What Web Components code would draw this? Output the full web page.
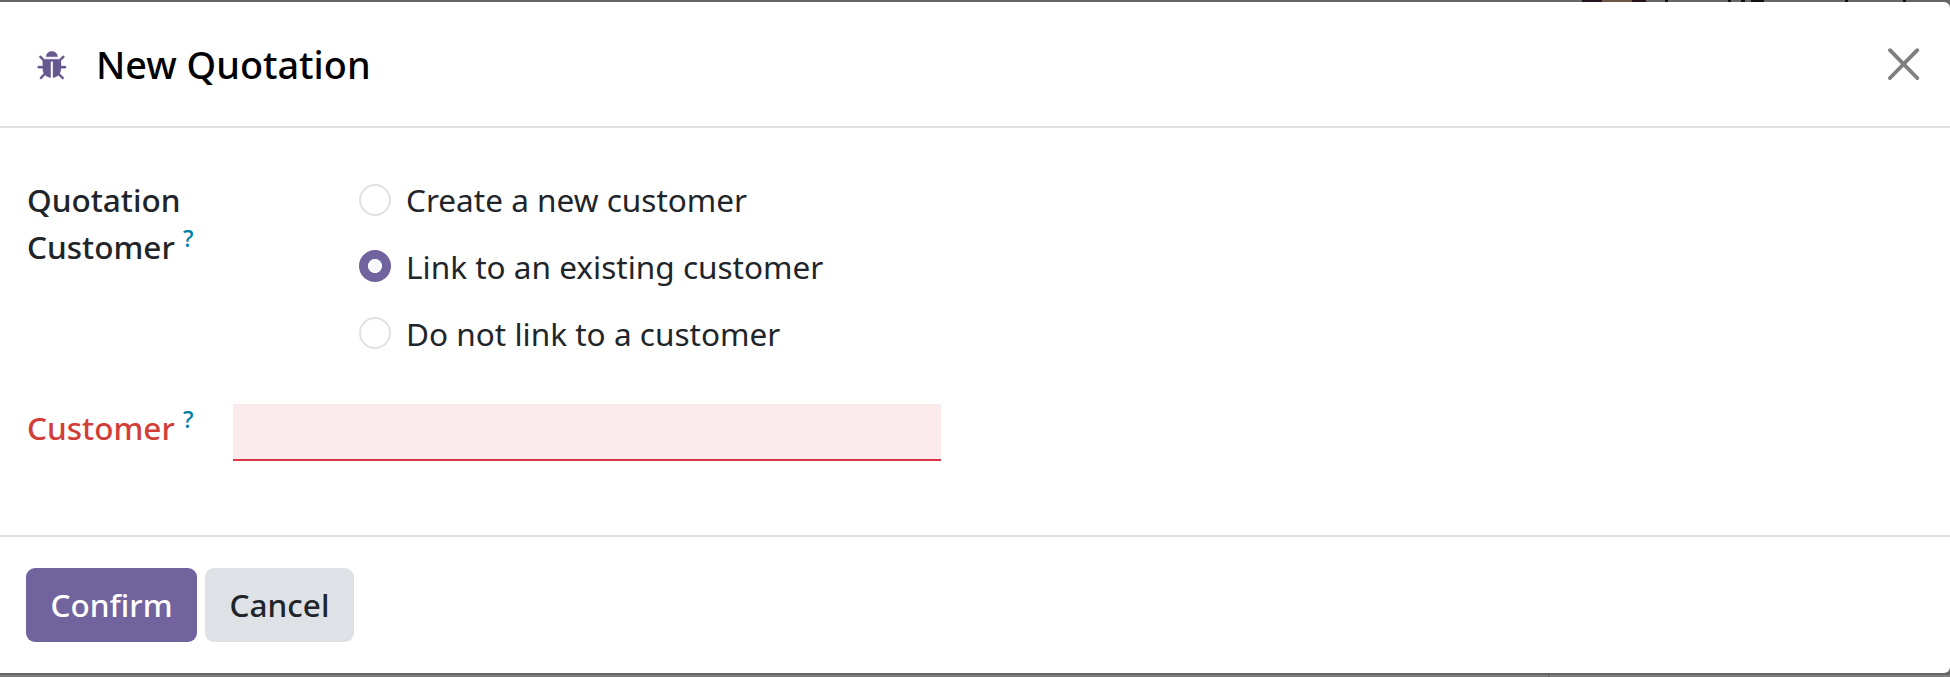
<!DOCTYPE html>
<html lang="en">
<head>
<meta charset="utf-8">
<title>New Quotation</title>
<style>
html,body{margin:0;height:100%;overflow:hidden}
body{font:400 31.54px/46.8px "Noto Sans",sans-serif;color:#212529;background:#666}
</style>
</head>
<body>
<quote-dialog>
  <bug-icon slot="icon"></bug-icon>
  <span slot="title">New Quotation</span>
  <form-row kind="radios">
    <field-label slot="label">Quotation Customer</field-label>
    <radio-option>Create a new customer</radio-option>
    <radio-option checked>Link to an existing customer</radio-option>
    <radio-option>Do not link to a customer</radio-option>
  </form-row>
  <form-row kind="input">
    <field-label slot="label" invalid>Customer</field-label>
    <text-field></text-field>
  </form-row>
  <action-button slot="footer" primary>Confirm</action-button>
  <action-button slot="footer">Cancel</action-button>
</quote-dialog>
<script>
const define = (name, html) => customElements.define(name, class extends HTMLElement {
  constructor() {
    super();
    this.attachShadow({mode: 'open'}).innerHTML = html;
  }
});

define('bug-icon', `<style>:host{display:block;width:32px;height:32px;margin-top:3px}svg{display:block;width:100%;height:100%}</style>
<svg viewBox="0 0 1792 1792" fill="#665990" stroke="#665990" stroke-width="16"><path d="M1632 960q0 26-19 45t-45 19h-224q0 171-67 290l208 209q19 19 19 45t-19 45q-18 19-45 19t-45-19l-198-197q-5 5-15 13t-42 28.500-65 36.500-82 29-97 13v-896h-128v896q-51 0-101.500-13.500t-87-33-66-39-43.500-32.500l-15-14-183 207q-20 21-48 21-24 0-43-16-19-18-20.500-44.500t15.500-46.500l202-227q-58-114-58-274h-224q-26 0-45-19t-19-45 19-45 45-19h224v-294l-173-173q-19-19-19-45t19-45 45-19 45 19l173 173h844l173-173q19-19 45-19t45 19 19 45-19 45l-173 173v294h224q26 0 45 19t19 45zm-480-576h-640q0-133 93.500-226.500t226.500-93.500 226.500 93.500 93.500 226.500z"/></svg>`);

define('close-button', `<style>:host{display:block;width:32px;height:32px}svg{display:block}</style>
<svg width="32" height="32" viewBox="0 0 32 32"><path d="M2 2.200 29.200 30M29.200 2.200 2 30" stroke="#7f7f7f" stroke-width="3.900" stroke-linecap="round"/></svg>`);

define('backdrop-strip', `<style>
:host{display:block;height:2px;position:relative;background:#676565;overflow:hidden}
.avatar{position:absolute;left:1582px;top:0;width:64px;height:2px;background:linear-gradient(90deg,#26121f 20px,#6f5644 20px 50px,#26121f 50px)}
i{position:absolute;top:0;height:2px;background:#111}
</style><div class="avatar"></div>
<i style="left:1665px;width:3px"></i><i style="left:1728px;width:3px"></i><i style="left:1741px;width:4px"></i><i style="left:1751px;width:13px"></i><i style="left:1845px;width:3px"></i><i style="left:1903px;width:3px"></i>`);

define('quote-dialog', `<style>
:host{display:flex;flex-direction:column;height:677px}
section{flex:none;height:671px;box-sizing:border-box;display:flex;flex-direction:column;background:#fff;border-radius:0 6px 6px 0}
header{height:124px;border-bottom:2px solid #dee2e6;display:flex;align-items:center;padding:0 30px 0 36.500px;box-sizing:content-box}
h4{margin:2px 0 0 27.500px;font-size:37.800px;line-height:56px;font-weight:500;color:#000;flex:1}
main{flex:1;padding:49px 27px 0;display:flex;flex-direction:column;gap:32px}
footer{height:138px;box-sizing:border-box;border-top:2px solid #dee2e6;display:flex;gap:8px;padding:31px 26px}
.below{height:2px;background:#666}
.edge{flex:1;background:#7f7f7f;display:flex}
.edge i{margin-left:1548px;width:2px;background:#6c6c6c}
</style>
<backdrop-strip></backdrop-strip>
<section>
<header><slot name="icon"></slot><h4><slot name="title"></slot></h4><close-button></close-button></header>
<main><slot></slot></main>
<footer><slot name="footer"></slot></footer>
</section><div class="below"></div><div class="edge"><i></i></div>`);

define('form-row', `<style>
:host{display:grid;grid-template-columns:206px 708px;align-items:start}
:host([kind=radios]){grid-template-columns:332px 600px;height:195px}
:host([kind=input]){height:57px}
.label{padding-right:60px}
:host([kind=input]) .label{padding:1px 0 0}
.content{display:flex;flex-direction:column;gap:20.200px}
</style><div class="label"><slot name="label"></slot></div><div class="content"><slot></slot></div>`);

define('field-label', `<style>
:host{display:block;font-weight:500}
:host([invalid]){color:#d23f3a}
sup{font-size:23.400px;line-height:0;color:#0180a5;vertical-align:baseline;position:relative;top:-11.700px;font-weight:500}
</style><slot></slot> <sup>?</sup>`);

define('radio-option', `<style>
:host{display:flex;align-items:center;height:46.800px;gap:15px;white-space:nowrap}
i{box-sizing:border-box;width:32px;height:32px;border:2px solid #dee2e6;border-radius:50%;margin:-1.800px 0 0}
:host([checked]) i{border:0;background:radial-gradient(circle,#f8f9fa 6.700px,#71639e 7.400px)}
</style><i></i><span><slot></slot></span>`);

define('text-field', `<style>:host{display:block;box-sizing:border-box;height:57px;background:#faeaeb;border-bottom:2px solid #dc3545}</style>`);

define('action-button', `<style>
:host{display:flex;align-items:center;justify-content:center;box-sizing:border-box;height:74px;width:149px;border-radius:9px;background:#dee2e6;font-weight:500}
:host([primary]){width:171px;background:#71639e;color:#fff}
</style><span><slot></slot></span>`);
</script>
</body>
</html>
